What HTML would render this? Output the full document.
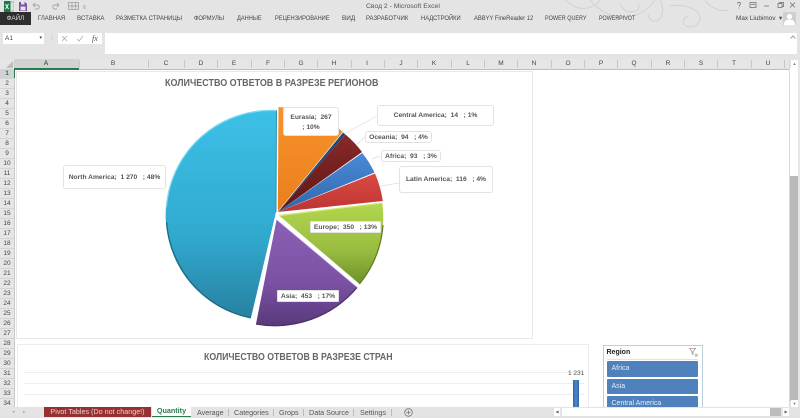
<!DOCTYPE html>
<html><head><meta charset="utf-8">
<style>
html,body{margin:0;padding:0;background:#fff}
#p{position:relative;width:800px;height:418px;overflow:hidden;background:#fff;font-family:"Liberation Sans","DejaVu Sans",sans-serif;color:#444;filter:blur(.3px)}
#p>div,#p>svg{position:absolute}
.t{white-space:nowrap}
.tab{position:absolute;top:14px;font-size:6.6px;line-height:9px;color:#444;white-space:nowrap;transform-origin:0 50%}
.col{position:absolute;top:0;font-size:6.5px;line-height:10px;color:#444;width:20px;margin-left:-10px;text-align:center}
.cs{position:absolute;top:1px;height:8px;width:1px;background:#c6c6c6}
.row{position:absolute;left:0;width:14px;text-align:center;font-size:6.5px;line-height:10px;height:10px;color:#444;box-shadow:inset 0 -1px 0 #d4d4d4}
.lb{position:absolute;background:#fff;border:1px solid #e2e2e2;border-radius:3px;font-size:6.7px;font-weight:bold;color:#555;text-align:center;white-space:nowrap;box-sizing:border-box}
.st{position:absolute;top:1px;font-size:7.2px;line-height:9px;color:#555;white-space:nowrap}
.sb{position:absolute;left:3px;width:91px;height:15.5px;background:#4f81bd;border-radius:1px;color:#e6edf5;font-size:7px;line-height:15px;text-indent:5px;white-space:nowrap}
.ti{transform-origin:0 50%;white-space:nowrap;font-size:10.2px;line-height:13px;font-weight:bold;color:#666}
</style></head><body>
<div id="p">
<!-- title + ribbon -->
<div style="left:0;top:0;width:800px;height:59px;background:#e4e4e4"></div>
<svg style="left:560px;top:0" width="170" height="34" viewBox="0 0 170 34" fill="none" stroke="#d2d2d2" stroke-width="1"><path d="M5 0C20 14 35 8 40 0M30 0C50 24 80 22 95 0M60 4C66 18 84 10 78 4M100 0C110 20 90 28 88 14M110 6C130 2 150 16 135 26 125 30 118 20 128 16M145 0C150 8 160 12 168 10"/></svg>
<svg style="left:4px;top:1px" width="10" height="11" viewBox="0 0 10 11"><rect x="3" y="1" width="7" height="9" fill="#d8e8dc" stroke="#7aa286" stroke-width=".6"/><rect x="0" y="0" width="6.500" height="11" fill="#1f7a45"/><path d="M1.500 3l3 5M4.500 3l-3 5" stroke="#fff" stroke-width=".9"/></svg>
<svg style="left:19px;top:2px" width="8" height="9" viewBox="0 0 8 9"><path d="M0 0h6l2 2v7H0z" fill="#7d4f9e"/><rect x="2" y="0" width="3.500" height="2.500" fill="#e8e0ee"/><rect x="1.500" y="4.500" width="5" height="4" fill="#e8e0ee"/></svg>
<svg style="left:32px;top:2px" width="30" height="9" viewBox="0 0 30 9" fill="none" stroke="#a8a8a8" stroke-width=".9"><path d="M1 3h4c3 0 3 4 0 4H3M3 1L1 3l2 2"/><path d="M27 3h-4c-3 0-3 4 0 4h2M25 1l2 2-2 2"/></svg>
<svg style="left:68px;top:2px" width="22" height="9" viewBox="0 0 22 9" fill="none" stroke="#999" stroke-width=".7"><rect x=".5" y=".5" width="10" height="7"/><path d="M4 .5v7M7.500 .5v7M.5 4h10"/><path d="M15 4h3M15 6h3"/></svg>
<div class="t" style="left:366px;top:2px;font-size:6.800px;line-height:9px;color:#555">Свод 2 - Microsoft Excel</div>
<div style="left:0;top:12px;width:31px;height:13px;background:#2e2e2e;color:#ddd;font-size:6.400px;line-height:13px;text-align:center">ФАЙЛ</div>
<div style="left:0;top:0;width:800px;height:30px">
<span class="tab" style="left:38px;transform:scaleX(.9)">ГЛАВНАЯ</span>
<span class="tab" style="left:77px;transform:scaleX(.93)">ВСТАВКА</span>
<span class="tab" style="left:116px;transform:scaleX(.9)">РАЗМЕТКА СТРАНИЦЫ</span>
<span class="tab" style="left:194px;transform:scaleX(.88)">ФОРМУЛЫ</span>
<span class="tab" style="left:237px;transform:scaleX(.86)">ДАННЫЕ</span>
<span class="tab" style="left:275px;transform:scaleX(.86)">РЕЦЕНЗИРОВАНИЕ</span>
<span class="tab" style="left:342px;transform:scaleX(.97)">ВИД</span>
<span class="tab" style="left:366px;transform:scaleX(.9)">РАЗРАБОТЧИК</span>
<span class="tab" style="left:421px;transform:scaleX(.88)">НАДСТРОЙКИ</span>
<span class="tab" style="left:474px;transform:scaleX(.88)">ABBYY FineReader 12</span>
<span class="tab" style="left:545px;transform:scaleX(.83)">POWER QUERY</span>
<span class="tab" style="left:599px;transform:scaleX(.81)">POWERPIVOT</span>
<span class="tab" style="left:736px;font-size:6.400px">Max Liubimov &nbsp;▾</span>
</div>
<div style="left:783px;top:12px;width:13px;height:13px;background:#cfcfcf"></div>
<svg style="left:783px;top:12px" width="13" height="13" viewBox="0 0 13 13"><circle cx="6.500" cy="4.500" r="2.600" fill="#fff"/><path d="M1 13c0-4 2-5.500 5.500-5.500S12 9 12 13z" fill="#fff"/></svg>
<svg style="left:735px;top:1px" width="60" height="9" viewBox="0 0 60 9" fill="none" stroke="#666" stroke-width=".7"><path d="M2.500 2.500c0-1.500 3-1.500 3 0 0 1.200-1.500 1.300-1.500 3M4 6.500v1"/><rect x="15" y="1.500" width="6" height="5"/><path d="M16 3.500h4"/><path d="M29 5h5"/><rect x="43" y="2.500" width="4" height="4"/><path d="M44.500 2.500v-1h4v4h-1.500"/><path d="M55 1.500l5 5M60 1.500l-5 5"/></svg>
<!-- formula bar -->
<div style="left:3px;top:33px;width:41px;height:11px;background:#fff;font-size:6.500px;line-height:11px;text-indent:2px;color:#444">A1<span style="position:absolute;right:2px;font-size:5px;text-indent:0">▾</span></div>
<div class="t" style="left:49px;top:33px;font-size:6px;line-height:11px;color:#999">⋮</div>
<div style="left:58px;top:33px;width:44px;height:11px;background:#fff"></div>
<svg style="left:58px;top:33px" width="44" height="11" viewBox="0 0 44 11" fill="none" stroke-width=".8"><path d="M4 3l5 5M9 3L4 8" stroke="#aaa"/><path d="M19 6l2 2 4-5" stroke="#aaa"/></svg>
<div class="t" style="left:92px;top:33px;font-family:'Liberation Serif',serif;font-style:italic;font-size:8px;line-height:11px;color:#555">fx</div>
<div style="left:105px;top:33px;width:692px;height:21px;background:#fff"></div>
<svg style="left:790px;top:35px" width="6" height="5" viewBox="0 0 6 5" fill="none" stroke="#888" stroke-width=".8"><path d="M.5 3.500L3 1l2.500 2.500"/></svg>
<!-- column headers -->
<div style="left:0;top:59px;width:790px;height:10px;background:#e6e6e6">
<div style="position:absolute;left:14px;top:0;width:65px;height:10px;background:#d2d2d2"></div>
<svg style="position:absolute;left:6px;top:2px" width="7" height="7"><path d="M7 0v7H0z" fill="#bdbdbd"/></svg>
<span class="col" style="left:46px;color:#2b6b4a;font-weight:bold">A</span><span class="col" style="left:113px">B</span><span class="col" style="left:166px">C</span><span class="col" style="left:201px">D</span><span class="col" style="left:234px">E</span><span class="col" style="left:268px">F</span><span class="col" style="left:301px">G</span><span class="col" style="left:334px">H</span><span class="col" style="left:367px">I</span><span class="col" style="left:401px">J</span><span class="col" style="left:434px">K</span><span class="col" style="left:468px">L</span><span class="col" style="left:501px">M</span><span class="col" style="left:534px">N</span><span class="col" style="left:568px">O</span><span class="col" style="left:601px">P</span><span class="col" style="left:634px">Q</span><span class="col" style="left:668px">R</span><span class="col" style="left:701px">S</span><span class="col" style="left:734px">T</span><span class="col" style="left:768px">U</span>
<i class="cs" style="left:79px"></i><i class="cs" style="left:148px"></i><i class="cs" style="left:184px"></i><i class="cs" style="left:217px"></i><i class="cs" style="left:251px"></i><i class="cs" style="left:284px"></i><i class="cs" style="left:317px"></i><i class="cs" style="left:351px"></i><i class="cs" style="left:384px"></i><i class="cs" style="left:417px"></i><i class="cs" style="left:451px"></i><i class="cs" style="left:484px"></i><i class="cs" style="left:517px"></i><i class="cs" style="left:551px"></i><i class="cs" style="left:584px"></i><i class="cs" style="left:617px"></i><i class="cs" style="left:651px"></i><i class="cs" style="left:684px"></i><i class="cs" style="left:717px"></i><i class="cs" style="left:751px"></i><i class="cs" style="left:784px"></i>
</div>
<div style="left:0;top:68.500px;width:790px;height:1px;background:#bdbdbd"></div>
<!-- row headers -->
<div style="left:0;top:69px;width:14px;height:338px;background:#e6e6e6;overflow:hidden">
<div class="row" style="top:0;background:#d2d2d2;color:#2b6b4a;font-weight:bold">1</div><div class="row" style="top:10px">2</div><div class="row" style="top:20px">3</div><div class="row" style="top:30px">4</div><div class="row" style="top:40px">5</div><div class="row" style="top:50px">6</div><div class="row" style="top:60px">7</div><div class="row" style="top:70px">8</div><div class="row" style="top:80px">9</div><div class="row" style="top:90px">10</div><div class="row" style="top:100px">11</div><div class="row" style="top:110px">12</div><div class="row" style="top:120px">13</div><div class="row" style="top:130px">14</div><div class="row" style="top:140px">15</div><div class="row" style="top:150px">16</div><div class="row" style="top:160px">17</div><div class="row" style="top:170px">18</div><div class="row" style="top:180px">19</div><div class="row" style="top:190px">20</div><div class="row" style="top:200px">21</div><div class="row" style="top:210px">22</div><div class="row" style="top:220px">23</div><div class="row" style="top:230px">24</div><div class="row" style="top:240px">25</div><div class="row" style="top:250px">26</div><div class="row" style="top:260px">27</div><div class="row" style="top:270px">28</div><div class="row" style="top:280px">29</div><div class="row" style="top:290px">30</div><div class="row" style="top:300px">31</div><div class="row" style="top:310px">32</div><div class="row" style="top:320px">33</div><div class="row" style="top:330px">34</div>
</div>
<div style="left:14px;top:69px;width:1px;height:338px;background:#c8c8c8"></div>
<div style="left:14px;top:68px;width:65px;height:1.500px;background:#2b7a52"></div>
<div style="left:13.500px;top:69px;width:1.500px;height:9px;background:#2b7a52"></div>
<!-- chart 1 -->
<div style="left:16px;top:71px;width:517px;height:268px;border:1px solid #e8e8e8;box-sizing:border-box;background:#fff"></div>
<div class="ti" style="left:165px;top:77px;transform:scaleX(.88)">КОЛИЧЕСТВО ОТВЕТОВ В РАЗРЕЗЕ РЕГИОНОВ</div>
<svg style="left:0;top:0" width="800" height="418" viewBox="0 0 800 418">
<defs>
<linearGradient id="gN" gradientUnits="userSpaceOnUse" x1="0" y1="110" x2="0" y2="320"><stop offset="0" stop-color="#3dc0e6"/><stop offset=".6" stop-color="#31a9cf"/><stop offset="1" stop-color="#27809f"/></linearGradient>
<linearGradient id="gE" gradientUnits="userSpaceOnUse" x1="0" y1="107" x2="0" y2="212"><stop offset="0" stop-color="#f9922c"/><stop offset="1" stop-color="#e87f1c"/></linearGradient>
<linearGradient id="gR" gradientUnits="userSpaceOnUse" x1="0" y1="130" x2="0" y2="212"><stop offset="0" stop-color="#8a2a2a"/><stop offset="1" stop-color="#5e1616"/></linearGradient>
<linearGradient id="gB" gradientUnits="userSpaceOnUse" x1="0" y1="152" x2="0" y2="212"><stop offset="0" stop-color="#4c8ad8"/><stop offset="1" stop-color="#2f67ac"/></linearGradient>
<linearGradient id="gL" gradientUnits="userSpaceOnUse" x1="0" y1="173" x2="0" y2="212"><stop offset="0" stop-color="#dc4a45"/><stop offset="1" stop-color="#bd3431"/></linearGradient>
<linearGradient id="gG" gradientUnits="userSpaceOnUse" x1="0" y1="203" x2="0" y2="284"><stop offset="0" stop-color="#b3d64e"/><stop offset=".6" stop-color="#97bb3f"/><stop offset="1" stop-color="#6f8f2b"/></linearGradient>
<linearGradient id="gP" gradientUnits="userSpaceOnUse" x1="0" y1="222" x2="0" y2="324"><stop offset="0" stop-color="#8a5fb5"/><stop offset=".6" stop-color="#7a51a3"/><stop offset="1" stop-color="#5a3a7c"/></linearGradient>
</defs>
<path d="M276.700 110A105.300 105.300 0 0 0 250.800 318.500L276 212Z" fill="url(#gN)"/>
<path d="M276.200 110.600A104.700 104.700 0 0 0 166.400 207" fill="none" stroke="#7fdcf4" stroke-width="1.200"/>
<path d="M166.600 222A104.700 104.700 0 0 0 250.500 317.600" fill="none" stroke="#1f6a85" stroke-width="1.300"/>
<path d="M276.500 110.500L276 212" stroke="#2a94b6" stroke-width="1"/>
<path d="M278.500 107A107 107 0 0 1 342.700 131.700L277.800 211.500Z" fill="url(#gE)"/>
<path d="M343 132.500L345.500 134.500L278 212Z" fill="#1d4a78"/>
<path d="M345.500 134.500A106 106 0 0 1 362 152L278 212Z" fill="url(#gR)"/>
<path d="M362.300 153A106 106 0 0 1 374.500 172.500L278 212Z" fill="url(#gB)"/>
<path d="M375 173.500A106 106 0 0 1 382.800 201L278 212Z" fill="url(#gL)"/>
<path d="M279 215.500L382.300 203A106 106 0 0 1 359.500 284Z" fill="url(#gG)"/>
<path d="M279 215.500L382.300 203" stroke="#d2ea7b" stroke-width="1.300"/>
<path d="M359.500 284A106 106 0 0 0 383 225" fill="none" stroke="#5f7c22" stroke-width="1.200"/>
<path d="M276.500 220L357 287.500A107 107 0 0 1 256 324Z" fill="url(#gP)"/>
<path d="M357 287.500A107 107 0 0 1 256 324" fill="none" stroke="#4c2f6b" stroke-width="1.200"/>
<path d="M276.500 220L357 287.500" stroke="#9f7bc6" stroke-width=".8"/>
<g stroke="#ddd" stroke-width=".7" fill="none"><path d="M346 133L377 116"/><path d="M356 145L367 135"/><path d="M372 159L380 156"/><path d="M381 186L399 183"/></g>
</svg>
<div class="lb" style="left:63px;top:165px;width:103px;height:24px;line-height:23px">North America;&nbsp; 1 270 &nbsp; ; 48%</div>
<div class="lb" style="left:283px;top:107px;width:56px;height:29px;line-height:9.500px;padding-top:5px">Eurasia;&nbsp; 267<br>; 10%</div>
<div class="lb" style="left:377px;top:105px;width:117px;height:21px;line-height:20px">Central America;&nbsp; 14 &nbsp; ; 1%</div>
<div class="lb" style="left:365px;top:131px;width:67px;height:12px;line-height:11px">Oceania;&nbsp; 94 &nbsp; ; 4%</div>
<div class="lb" style="left:381px;top:150px;width:60px;height:12px;line-height:11px">Africa;&nbsp; 93 &nbsp; ; 3%</div>
<div class="lb" style="left:399px;top:166px;width:94px;height:27px;line-height:26px">Latin America;&nbsp; 116 &nbsp; ; 4%</div>
<div class="lb" style="left:310px;top:221px;width:71px;height:12px;line-height:11px;border-radius:1px">Europe;&nbsp; 350 &nbsp; ; 13%</div>
<div class="lb" style="left:277px;top:290px;width:62px;height:12px;line-height:11px;border-radius:1px">Asia;&nbsp; 453 &nbsp; ; 17%</div>
<!-- chart 2 -->
<div style="left:17px;top:344px;width:572px;height:70px;border:1px solid #ececec;box-sizing:border-box;background:#fff"></div>
<div class="ti" style="left:204px;top:351px;transform:scaleX(.86)">КОЛИЧЕСТВО ОТВЕТОВ В РАЗРЕЗЕ СТРАН</div>
<div style="left:24px;top:371.500px;width:560px;height:1px;background:#eee"></div>
<div style="left:24px;top:383px;width:560px;height:1px;background:#eee"></div>
<div style="left:24px;top:394px;width:560px;height:1px;background:#eee"></div>
<div class="t" style="left:568px;top:369px;font-size:6.500px;line-height:9px;color:#555">1 231</div>
<div style="left:572.500px;top:380px;width:6px;height:27px;background:linear-gradient(90deg,#2f66a8,#4f86c8 50%,#2f66a8)"></div>
<!-- slicer -->
<div style="left:602.500px;top:344.500px;width:100px;height:64px;border:1px solid #b9cfdb;box-sizing:border-box;background:#fff;overflow:hidden">
<div class="t" style="position:absolute;left:3px;top:2px;font-size:7px;line-height:10px;font-weight:bold;color:#222">Region</div>
<svg style="position:absolute;left:85px;top:2px" width="9" height="9" viewBox="0 0 9 9" fill="none" stroke="#999" stroke-width=".8"><path d="M.5 .5h6L4 3.500v3L3 5.500v-2z"/><path d="M6 6l2.500 2.500M8.500 6L6 8.500"/></svg>
<div style="position:absolute;left:3px;top:13px;width:91px;height:1px;background:#dce6ee"></div>
<div class="sb" style="top:15.500px">Africa</div>
<div class="sb" style="top:33px">Asia</div>
<div class="sb" style="top:50.500px">Central America</div>
</div>
<!-- scrollbar -->
<div style="left:788.500px;top:59px;width:1.500px;height:348px;background:#d8d8d8"></div>
<div style="left:790px;top:59px;width:10px;height:348px;background:#e6e6e6"></div>
<div style="left:791px;top:60px;width:7px;height:8px;background:#fff;font-size:4px;line-height:8px;text-align:center;color:#777">▲</div>
<div style="left:790px;top:68px;width:8px;height:108px;background:#fff"></div>
<div style="left:790px;top:176px;width:8px;height:225px;background:#b9b9b9"></div>
<div style="left:791px;top:400px;width:7px;height:7px;background:#fff;font-size:4px;line-height:7px;text-align:center;color:#777">▼</div>
<!-- sheet tabs -->
<div style="left:0;top:407px;width:800px;height:11px;background:#e4e4e4">
<span class="st" style="left:12px;color:#aaa;font-size:5px">◂</span><span class="st" style="left:23px;color:#aaa;font-size:5px">▸</span>
<div style="position:absolute;left:44px;top:0;width:107px;height:10px;background:#973030;color:#e8d0d0;font-size:7.200px;line-height:9px;text-align:center;white-space:nowrap">Pivot Tables (Do not change!)</div>
<div style="position:absolute;left:152px;top:-1px;width:39px;height:11px;background:#fff;border-bottom:1px solid #2b7a52;box-sizing:border-box;color:#2b7a52;font-size:7.200px;line-height:10px;font-weight:bold;text-align:center">Quantity</div>
<span class="st" style="left:197px">Average</span>
<span class="st" style="left:234px">Categories</span>
<span class="st" style="left:279px">Grops</span>
<span class="st" style="left:309px">Data Source</span>
<span class="st" style="left:360px">Settings</span>
<i style="position:absolute;left:228px;top:2px;width:1px;height:7px;background:#bbb"></i>
<i style="position:absolute;left:273px;top:2px;width:1px;height:7px;background:#bbb"></i>
<i style="position:absolute;left:303px;top:2px;width:1px;height:7px;background:#bbb"></i>
<i style="position:absolute;left:353px;top:2px;width:1px;height:7px;background:#bbb"></i>
<i style="position:absolute;left:391px;top:2px;width:1px;height:7px;background:#bbb"></i>
<svg style="position:absolute;left:404px;top:1px" width="9" height="9" viewBox="0 0 9 9" fill="none" stroke="#777" stroke-width=".8"><circle cx="4.500" cy="4.500" r="3.800"/><path d="M2.500 4.500h4M4.500 2.500v4"/></svg>
<div style="position:absolute;left:554px;top:1px;width:6px;height:8px;background:#fff;font-size:4px;line-height:8px;text-align:center;color:#666">◀</div>
<div style="position:absolute;left:562px;top:1px;width:208px;height:8px;background:#fff"></div>
<div style="position:absolute;left:770px;top:1px;width:11px;height:8px;background:#bdbdbd"></div>
<div style="position:absolute;left:783px;top:1px;width:6px;height:8px;background:#fff;font-size:4px;line-height:8px;text-align:center;color:#666">▶</div>
</div>
</div>
</body></html>
